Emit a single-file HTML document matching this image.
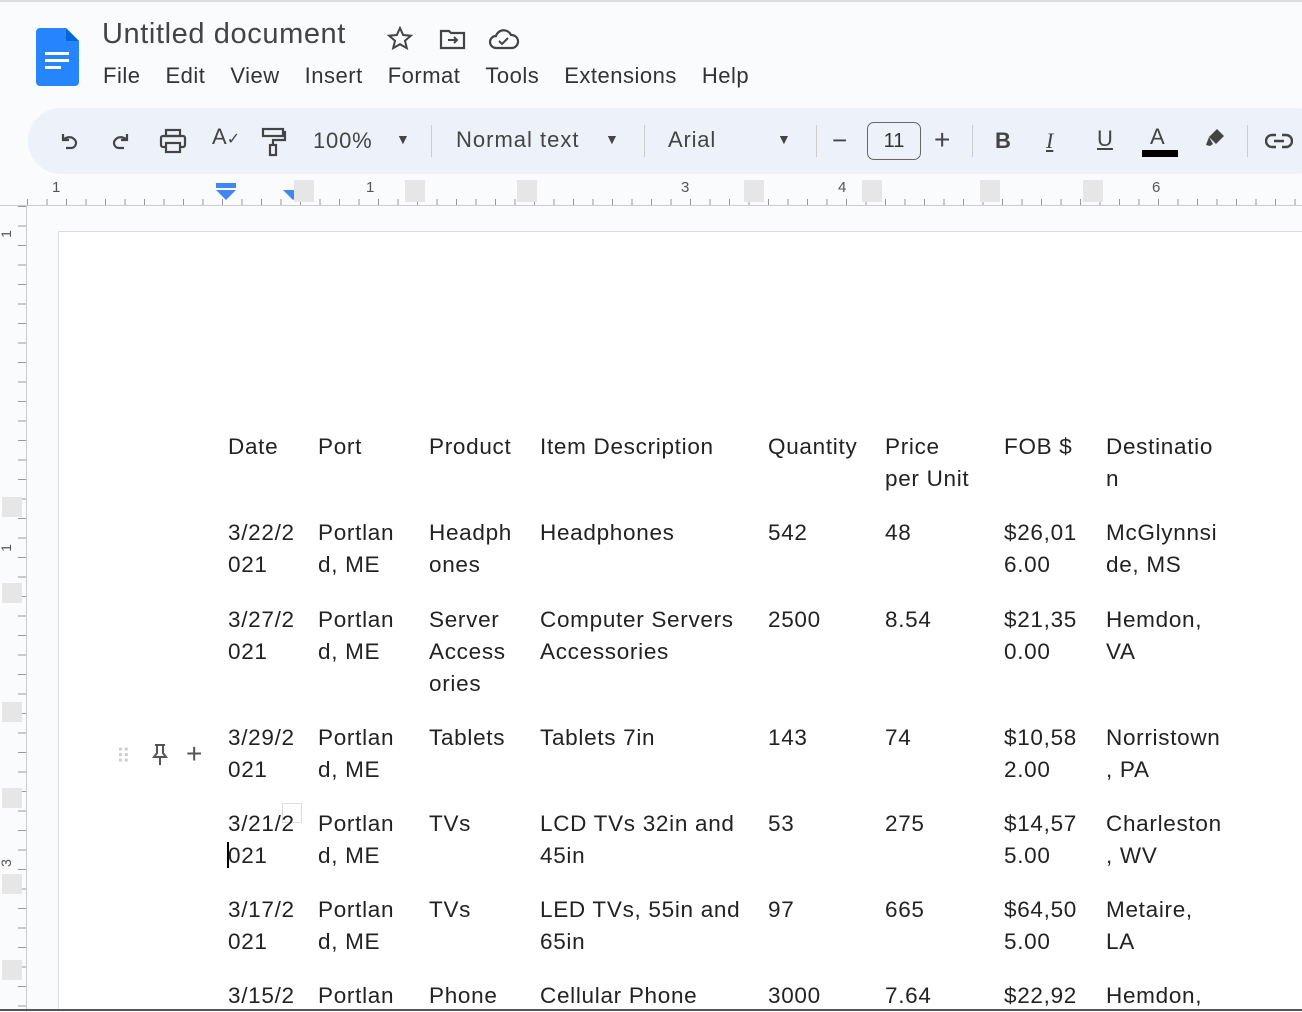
<!DOCTYPE html>
<html><head><style>
body{margin:0;width:1302px;height:1012px;background:#f9fbfd;font-family:"Liberation Sans",Arial,sans-serif;position:relative;overflow:hidden;color:#202124}
.a{position:absolute;white-space:nowrap}
.menu span{margin-right:25px}
.t{position:absolute;font-size:22.5px;line-height:32px;color:#222;letter-spacing:0.7px;white-space:nowrap}
</style></head><body>
<div class="a" style="left:0;top:0;width:1302px;height:2px;background:#ddd"></div>
<svg class="a" style="left:36px;top:28px" width="44" height="58" viewBox="0 0 44 58"><path d="M4 0h26l13 13v41a4 4 0 0 1-4 4H4a4 4 0 0 1-4-4V4a4 4 0 0 1 4-4z" fill="#2684fc"/><path d="M30 0l13 13H30z" fill="#0066da"/><rect x="9" y="24" width="24" height="3" fill="#fff"/><rect x="9" y="31" width="24" height="3" fill="#fff"/><rect x="9" y="38" width="16" height="3" fill="#fff"/></svg>
<div class="a" style="left:102px;top:18px;font-size:29px;color:#444;letter-spacing:0.6px">Untitled document</div>
<svg class="a" style="left:387px;top:26px" width="26" height="24" viewBox="0 0 26 24"><path d="M13 2l3.2 7 7.6.7-5.8 5 1.8 7.4L13 18.2 6.2 22.1 8 14.7l-5.8-5 7.6-.7z" fill="none" stroke="#444" stroke-width="2"/></svg>
<svg class="a" style="left:439px;top:28px" width="28" height="22" viewBox="0 0 28 22"><path d="M2 3h8l2 2h13v15H2z" fill="none" stroke="#444" stroke-width="2.2"/><path d="M9 12h9m-3-3l3 3-3 3" fill="none" stroke="#444" stroke-width="2"/></svg>
<svg class="a" style="left:488px;top:28px" width="32" height="22" viewBox="0 0 32 22"><path d="M8 20a6 6 0 0 1 0-12 8 8 0 0 1 15-1 6 6 0 0 1 1 13z" fill="none" stroke="#444" stroke-width="2.2"/><path d="M11 13l3 3 6-6" fill="none" stroke="#444" stroke-width="2"/></svg>
<div class="a menu" style="left:103px;top:63px;font-size:22px;color:#333;letter-spacing:0.5px"><span>File</span><span>Edit</span><span>View</span><span>Insert</span><span>Format</span><span>Tools</span><span>Extensions</span><span>Help</span></div>
<div class="a" style="left:28px;top:108px;width:1300px;height:66px;border-radius:33px;background:#edf2fa"></div>
<svg class="a" style="left:58px;top:130px" width="24" height="24" viewBox="0 0 24 24"><path d="M5 4v6h6M5 10c3-3 8-4 11-1a5 5 0 0 1-3 9H8" fill="none" stroke="#444" stroke-width="2.2"/></svg>
<svg class="a" style="left:108px;top:130px" width="24" height="24" viewBox="0 0 24 24"><path d="M19 4v6h-6M19 10c-3-3-8-4-11-1a5 5 0 0 0 3 9h5" fill="none" stroke="#444" stroke-width="2.2"/></svg>
<svg class="a" style="left:159px;top:128px" width="28" height="26" viewBox="0 0 28 26"><rect x="7" y="2" width="14" height="6" fill="none" stroke="#444" stroke-width="2.2"/><rect x="2" y="8" width="24" height="11" rx="2" fill="none" stroke="#444" stroke-width="2.2"/><rect x="7" y="15" width="14" height="9" fill="#edf2fa" stroke="#444" stroke-width="2.2"/></svg>
<div class="a" style="left:212px;top:124px;font-size:22px;color:#444">A<span style="font-size:16px">✓</span></div>
<svg class="a" style="left:261px;top:127px" width="26" height="30" viewBox="0 0 26 30"><rect x="2" y="2" width="20" height="7" fill="none" stroke="#444" stroke-width="2.2"/><path d="M22 5h2v8H12v5" fill="none" stroke="#444" stroke-width="2.2"/><rect x="9" y="18" width="6" height="10" fill="none" stroke="#444" stroke-width="2.2"/></svg>
<div class="a" style="left:313px;top:128px;font-size:22px;color:#444;letter-spacing:0.8px">100%</div>
<div class="a" style="left:396px;top:131px;font-size:14px;color:#444">▼</div>
<div class="a" style="left:431px;top:125px;width:1px;height:32px;background:#ccc"></div>
<div class="a" style="left:456px;top:127px;font-size:22px;color:#444;letter-spacing:1px">Normal text</div>
<div class="a" style="left:605px;top:131px;font-size:14px;color:#444">▼</div>
<div class="a" style="left:644px;top:125px;width:1px;height:32px;background:#ccc"></div>
<div class="a" style="left:668px;top:127px;font-size:22px;color:#444;letter-spacing:0.8px">Arial</div>
<div class="a" style="left:777px;top:131px;font-size:14px;color:#444">▼</div>
<div class="a" style="left:816px;top:125px;width:1px;height:32px;background:#ccc"></div>
<div class="a" style="left:832px;top:125px;font-size:26px;color:#444">−</div>
<div class="a" style="left:867px;top:122px;width:52px;height:36px;border:1.5px solid #666;border-radius:7px;font-size:20px;text-align:center;line-height:36px;color:#333">11</div>
<div class="a" style="left:934px;top:124px;font-size:28px;color:#444">+</div>
<div class="a" style="left:972px;top:125px;width:1px;height:32px;background:#ccc"></div>
<div class="a" style="left:995px;top:128px;font-size:22px;font-weight:bold;color:#444">B</div>
<div class="a" style="left:1046px;top:128px;font-size:22px;font-style:italic;font-family:'Liberation Serif',serif;color:#444;text-decoration:underline">I</div>
<div class="a" style="left:1097px;top:126px;font-size:22px;color:#444;text-decoration:underline">U</div>
<div class="a" style="left:1150px;top:124px;font-size:22px;color:#444">A</div>
<div class="a" style="left:1142px;top:150px;width:36px;height:7px;background:#000"></div>
<svg class="a" style="left:1203px;top:126px" width="24" height="24" viewBox="0 0 24 24"><path d="M14 3l7 7-8 8-7-7zM6 11l-3 8 4 1 3-2" fill="#444"/></svg>
<div class="a" style="left:1247px;top:125px;width:1px;height:32px;background:#ccc"></div>
<svg class="a" style="left:1265px;top:132px" width="28" height="18" viewBox="0 0 28 18"><path d="M11 3H7a6 6 0 0 0 0 12h4M17 3h4a6 6 0 0 1 0 12h-4M9 9h10" fill="none" stroke="#444" stroke-width="2.4"/></svg>
<!-- ruler -->
<div class="a" style="left:27px;top:176px;width:1275px;height:30px;background:repeating-linear-gradient(90deg,#999 0 1px,transparent 1px 19.5px) 0 23px/100% 7px no-repeat"></div>
<div class="a" style="left:0;top:205px;width:1302px;height:1px;background:#ccc"></div>
<div class="a" style="left:52px;top:179px;font-size:15px;color:#555">1</div>
<div class="a" style="left:366px;top:179px;font-size:15px;color:#555">1</div>
<div class="a" style="left:681px;top:179px;font-size:15px;color:#555">3</div>
<div class="a" style="left:838px;top:179px;font-size:15px;color:#555">4</div>
<div class="a" style="left:1152px;top:179px;font-size:15px;color:#555">6</div>
<div class="a" style="left:216px;top:183px;width:20px;height:5px;background:#4285f4"></div>
<div class="a" style="left:216px;top:190px;width:0;height:0;border:10px solid transparent;border-top:10px solid #4285f4;border-bottom:0"></div>
<div class="a" style="left:283px;top:190px;width:0;height:0;border:10px solid transparent;border-top:10px solid #4285f4;border-bottom:0"></div>
<div class="a" style="left:294px;top:180px;width:20px;height:22px;background:#e6e6e6"></div>
<div class="a" style="left:405px;top:180px;width:20px;height:22px;background:#e6e6e6"></div>
<div class="a" style="left:517px;top:180px;width:20px;height:22px;background:#e6e6e6"></div>
<div class="a" style="left:744px;top:180px;width:20px;height:22px;background:#e6e6e6"></div>
<div class="a" style="left:862px;top:180px;width:20px;height:22px;background:#e6e6e6"></div>
<div class="a" style="left:980px;top:180px;width:20px;height:22px;background:#e6e6e6"></div>
<div class="a" style="left:1083px;top:180px;width:20px;height:22px;background:#e6e6e6"></div>
<!-- vertical ruler -->
<div class="a" style="left:26px;top:206px;width:1px;height:806px;background:#ccc"></div>
<div class="a" style="left:18px;top:206px;width:8px;height:806px;background:repeating-linear-gradient(180deg,#999 0 1px,transparent 1px 19.5px)"></div>
<div class="a" style="left:2px;top:226px;font-size:14px;color:#555;transform:rotate(-90deg)">1</div>
<div class="a" style="left:2px;top:540px;font-size:14px;color:#555;transform:rotate(-90deg)">1</div>
<div class="a" style="left:2px;top:855px;font-size:14px;color:#555;transform:rotate(-90deg)">3</div>
<div class="a" style="left:2px;top:497px;width:20px;height:20px;background:#e6e6e6"></div>
<div class="a" style="left:2px;top:583px;width:20px;height:20px;background:#e6e6e6"></div>
<div class="a" style="left:2px;top:702px;width:20px;height:20px;background:#e6e6e6"></div>
<div class="a" style="left:2px;top:788px;width:20px;height:20px;background:#e6e6e6"></div>
<div class="a" style="left:2px;top:874px;width:20px;height:20px;background:#e6e6e6"></div>
<div class="a" style="left:2px;top:960px;width:20px;height:20px;background:#e6e6e6"></div>
<!-- page -->
<div class="a" style="left:58px;top:231px;width:1250px;height:778px;background:#fff;border:1px solid #ddd"></div>
<div class="a" style="left:0;top:1009px;width:1302px;height:2px;background:#555"></div>
<div class="a" style="left:116px;top:744px;font-size:20px;color:#ccc">⠿</div>
<svg class="a" style="left:150px;top:743px" width="20" height="24" viewBox="0 0 20 24"><path d="M5 2h10M7 2v8l-3 4h12l-3-4V2M10 14v8" fill="none" stroke="#555" stroke-width="2"/></svg>
<div class="a" style="left:186px;top:738px;font-size:28px;color:#555">+</div>
<div class="a" style="left:282px;top:803px;width:18px;height:18px;border:1px solid #ddd;background:#fff"></div>
<div class="a" style="left:227px;top:842px;width:2px;height:26px;background:#000"></div>

<div class="t" style="left:228px;top:431px">Date</div>
<div class="t" style="left:318px;top:431px">Port</div>
<div class="t" style="left:429px;top:431px">Product</div>
<div class="t" style="left:540px;top:431px">Item Description</div>
<div class="t" style="left:768px;top:431px">Quantity</div>
<div class="t" style="left:885px;top:431px">Price<br>per Unit</div>
<div class="t" style="left:1004px;top:431px">FOB $</div>
<div class="t" style="left:1106px;top:431px">Destinatio<br>n</div>

<div class="t" style="left:228px;top:517px">3/22/2<br>021</div>
<div class="t" style="left:318px;top:517px">Portlan<br>d, ME</div>
<div class="t" style="left:429px;top:517px">Headph<br>ones</div>
<div class="t" style="left:540px;top:517px">Headphones</div>
<div class="t" style="left:768px;top:517px">542</div>
<div class="t" style="left:885px;top:517px">48</div>
<div class="t" style="left:1004px;top:517px">$26,01<br>6.00</div>
<div class="t" style="left:1106px;top:517px">McGlynnsi<br>de, MS</div>

<div class="t" style="left:228px;top:604px">3/27/2<br>021</div>
<div class="t" style="left:318px;top:604px">Portlan<br>d, ME</div>
<div class="t" style="left:429px;top:604px">Server<br>Access<br>ories</div>
<div class="t" style="left:540px;top:604px">Computer Servers<br>Accessories</div>
<div class="t" style="left:768px;top:604px">2500</div>
<div class="t" style="left:885px;top:604px">8.54</div>
<div class="t" style="left:1004px;top:604px">$21,35<br>0.00</div>
<div class="t" style="left:1106px;top:604px">Hemdon,<br>VA</div>

<div class="t" style="left:228px;top:722px">3/29/2<br>021</div>
<div class="t" style="left:318px;top:722px">Portlan<br>d, ME</div>
<div class="t" style="left:429px;top:722px">Tablets</div>
<div class="t" style="left:540px;top:722px">Tablets 7in</div>
<div class="t" style="left:768px;top:722px">143</div>
<div class="t" style="left:885px;top:722px">74</div>
<div class="t" style="left:1004px;top:722px">$10,58<br>2.00</div>
<div class="t" style="left:1106px;top:722px">Norristown<br>, PA</div>

<div class="t" style="left:228px;top:808px">3/21/2<br>021</div>
<div class="t" style="left:318px;top:808px">Portlan<br>d, ME</div>
<div class="t" style="left:429px;top:808px">TVs</div>
<div class="t" style="left:540px;top:808px">LCD TVs 32in and<br>45in</div>
<div class="t" style="left:768px;top:808px">53</div>
<div class="t" style="left:885px;top:808px">275</div>
<div class="t" style="left:1004px;top:808px">$14,57<br>5.00</div>
<div class="t" style="left:1106px;top:808px">Charleston<br>, WV</div>

<div class="t" style="left:228px;top:894px">3/17/2<br>021</div>
<div class="t" style="left:318px;top:894px">Portlan<br>d, ME</div>
<div class="t" style="left:429px;top:894px">TVs</div>
<div class="t" style="left:540px;top:894px">LED TVs, 55in and<br>65in</div>
<div class="t" style="left:768px;top:894px">97</div>
<div class="t" style="left:885px;top:894px">665</div>
<div class="t" style="left:1004px;top:894px">$64,50<br>5.00</div>
<div class="t" style="left:1106px;top:894px">Metaire,<br>LA</div>

<div class="t" style="left:228px;top:980px">3/15/2</div>
<div class="t" style="left:318px;top:980px">Portlan</div>
<div class="t" style="left:429px;top:980px">Phone</div>
<div class="t" style="left:540px;top:980px">Cellular Phone</div>
<div class="t" style="left:768px;top:980px">3000</div>
<div class="t" style="left:885px;top:980px">7.64</div>
<div class="t" style="left:1004px;top:980px">$22,92</div>
<div class="t" style="left:1106px;top:980px">Hemdon,</div>
</body></html>
